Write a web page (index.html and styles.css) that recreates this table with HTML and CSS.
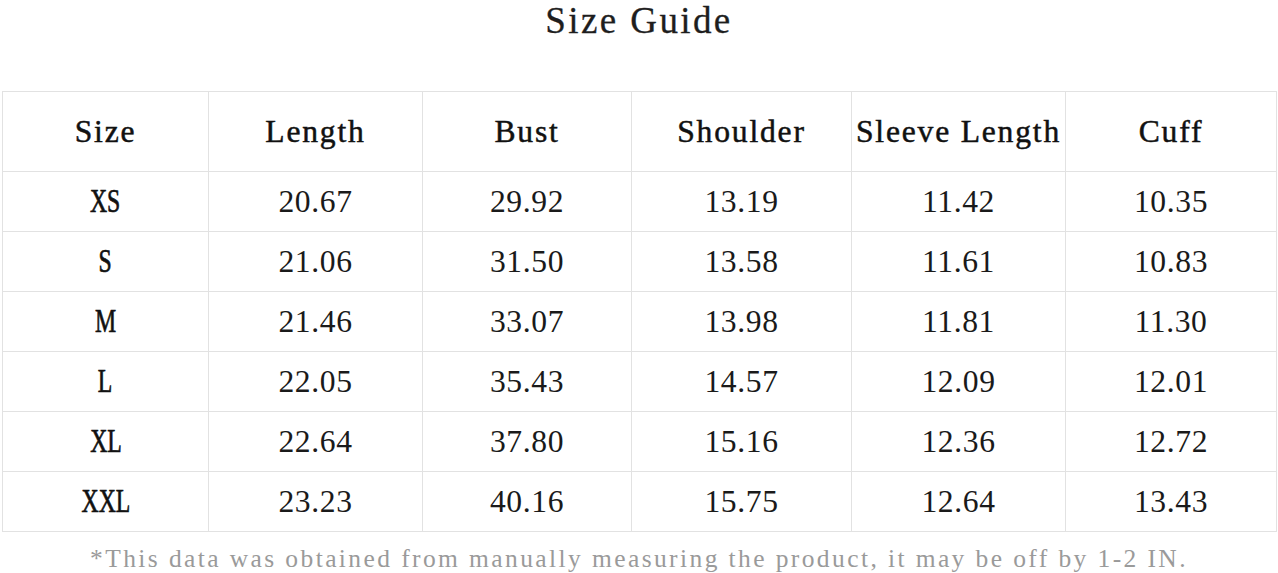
FILE: index.html
```html
<!DOCTYPE html>
<html lang="en">
<head>
<meta charset="utf-8">
<title>Size Guide</title>
<link rel="stylesheet" href="styles.css">
</head>
<body>
<div class="page">
  <h1 class="title">Size Guide</h1>
  <table class="chart">
    <colgroup>
      <col class="c1"><col class="c2"><col class="c3"><col class="c4"><col class="c5"><col class="c6">
    </colgroup>
    <thead>
      <tr class="head">
        <th>Size</th>
        <th>Length</th>
        <th>Bust</th>
        <th>Shoulder</th>
        <th>Sleeve Length</th>
        <th>Cuff</th>
      </tr>
    </thead>
    <tbody>
      <tr><th><span class="sz">XS</span></th><td>20.67</td><td>29.92</td><td>13.19</td><td>11.42</td><td>10.35</td></tr>
      <tr><th><span class="sz">S</span></th><td>21.06</td><td>31.50</td><td>13.58</td><td>11.61</td><td>10.83</td></tr>
      <tr><th><span class="sz">M</span></th><td>21.46</td><td>33.07</td><td>13.98</td><td>11.81</td><td>11.30</td></tr>
      <tr><th><span class="sz">L</span></th><td>22.05</td><td>35.43</td><td>14.57</td><td>12.09</td><td>12.01</td></tr>
      <tr><th><span class="sz">XL</span></th><td>22.64</td><td>37.80</td><td>15.16</td><td>12.36</td><td>12.72</td></tr>
      <tr><th><span class="sz">XXL</span></th><td>23.23</td><td>40.16</td><td>15.75</td><td>12.64</td><td>13.43</td></tr>
    </tbody>
  </table>
  <p class="note">*This data was obtained from manually measuring the product, it may be off by 1-2 IN.</p>
</div>
</body>
</html>
```
FILE: styles.css
```css
html, body {
  margin: 0;
  padding: 0;
  background: #fff;
}
body {
  font-family: "Liberation Serif", "DejaVu Serif", serif;
  color: #1c1c1c;
  width: 1278px;
  height: 573px;
  overflow: hidden;
}
.page {
  display: flex;
  flex-direction: column;
  align-items: stretch;
}
.title {
  margin: 0;
  height: 91px;
  text-align: center;
  font-size: 37px;
  font-weight: normal;
  line-height: 41px;
  letter-spacing: 2.4px;
  color: #1e1e1e;
  -webkit-text-stroke: 0.3px #1e1e1e;
}
.chart {
  margin-left: 2px;
  width: 1274px;
  border-collapse: collapse;
  table-layout: fixed;
}
.c1 { width: 206px; }
.c2 { width: 214px; }
.c3 { width: 209px; }
.c4 { width: 220px; }
.c5 { width: 214px; }
.c6 { width: 211px; }
.chart th,
.chart td {
  border: 1px solid #e2e2e2;
  padding: 0;
  text-align: center;
  vertical-align: middle;
  font-size: 31.6px;
  height: 59px;
  line-height: 30px;
  white-space: nowrap;
}
.chart td {
  font-weight: normal;
  color: #1a1a1a;
  letter-spacing: 0.6px;
}
.chart th {
  font-weight: normal;
  color: #111;
  -webkit-text-stroke: 0.7px #111;
}
.sz {
  display: inline-block;
  font-size: 33px;
  transform: scaleX(0.72);
}
.chart .head th {
  height: 79px;
  letter-spacing: 1.8px;
  -webkit-text-stroke: 0.5px #111;
}
.note {
  margin: 0;
  padding-top: 14px;
  text-align: center;
  font-size: 25.5px;
  line-height: 26px;
  letter-spacing: 2.4px;
  white-space: nowrap;
  color: #9a9a9a;
}
```
